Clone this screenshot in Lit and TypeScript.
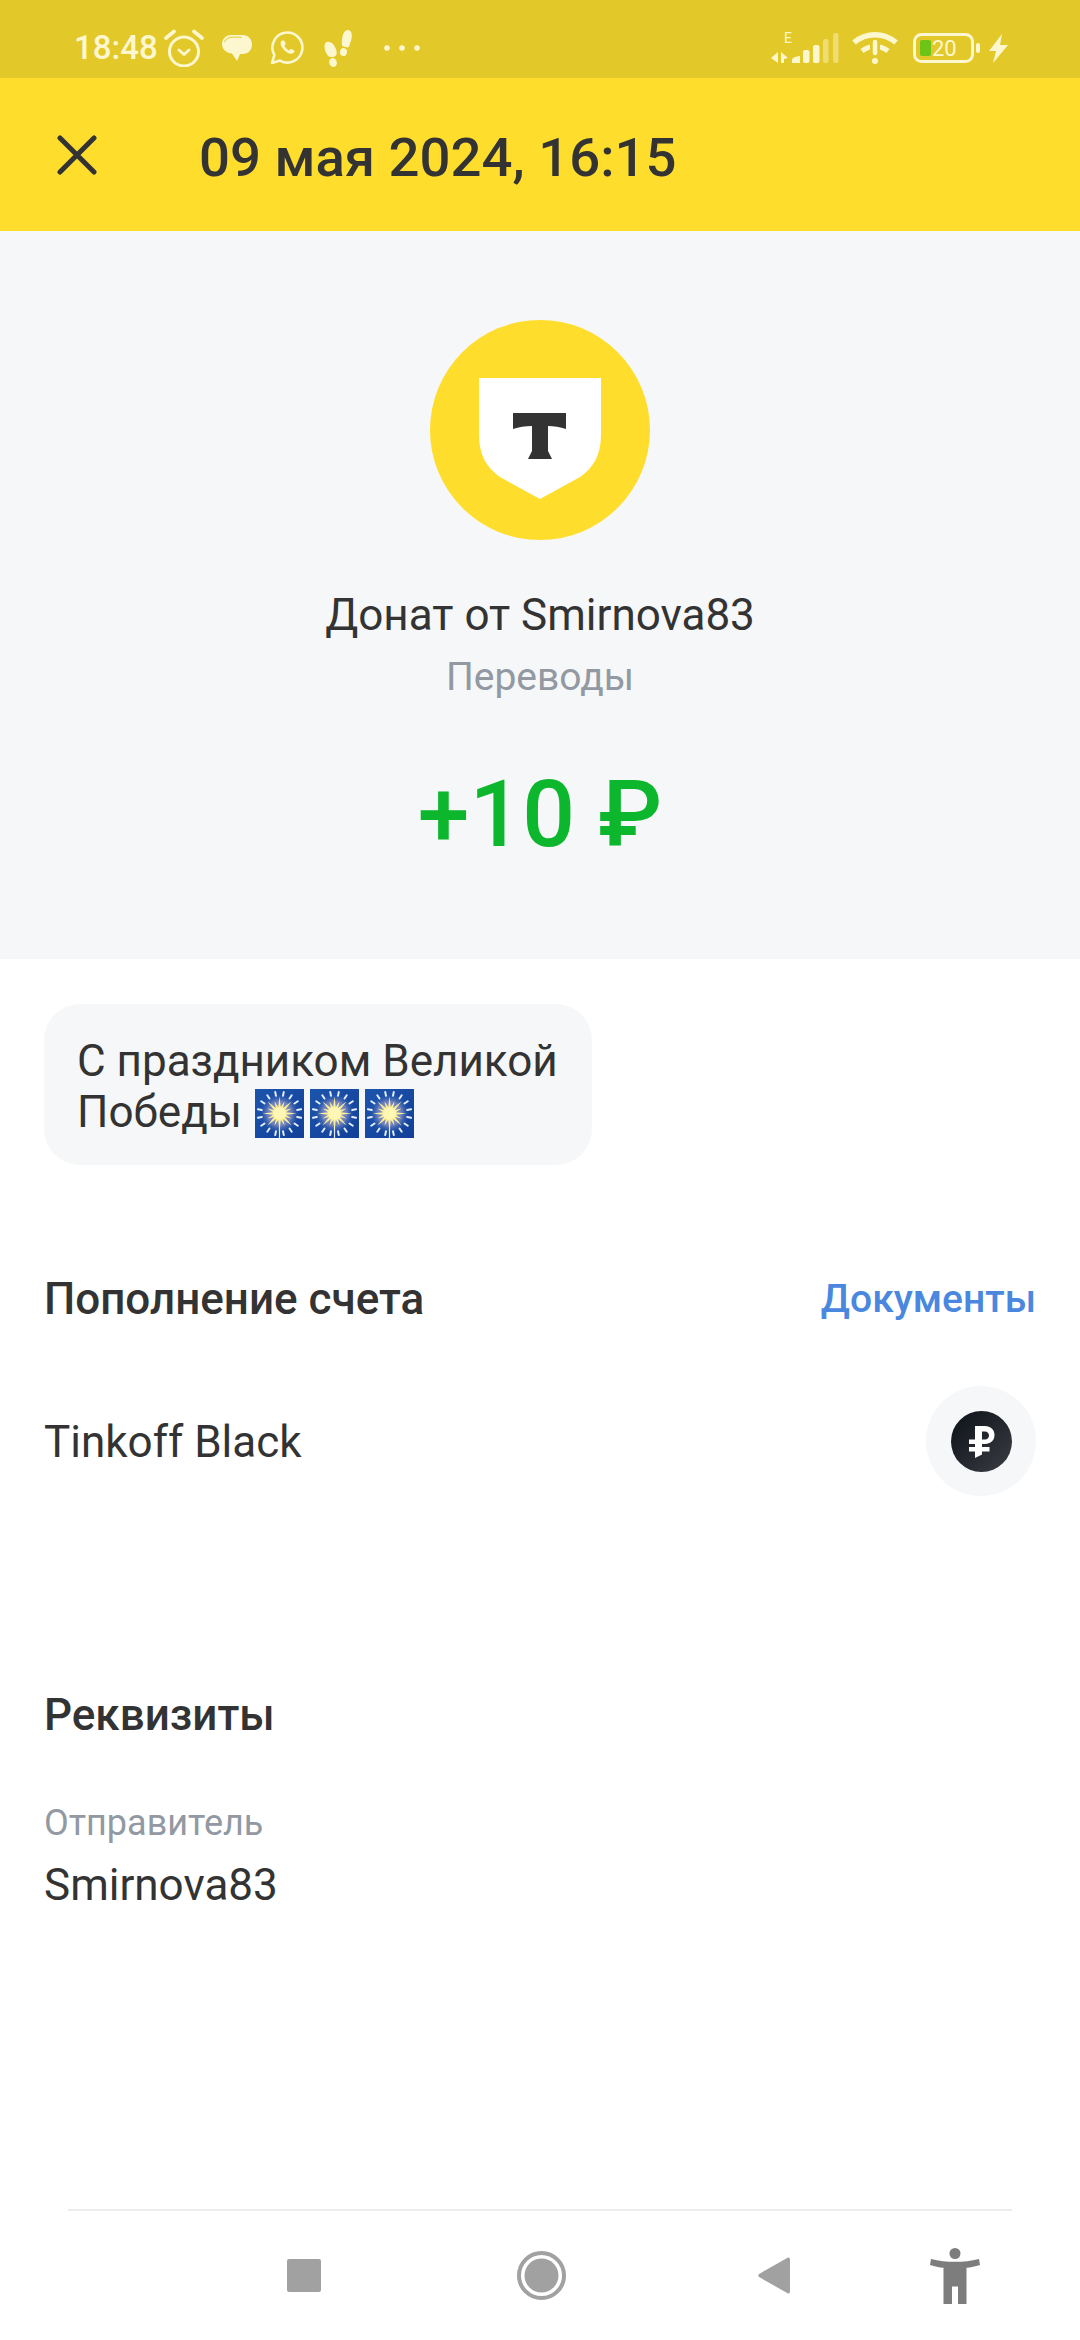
import { LitElement, html, svg, css } from 'lit';
import { customElement, property } from 'lit/decorators.js';

const rays = Array.from({ length: 16 }, (_, i) => (i * Math.PI) / 8);

// yellow star in the middle of the firework emoji
const starPoints = Array.from({ length: 32 }, (_, i) => {
  const a = (i * Math.PI) / 16;
  const r = i % 2 ? 6.5 : i % 4 ? 13 : 17;
  return `${24.5 + Math.cos(a) * r},${24.5 + Math.sin(a) * r}`;
}).join(' ');

const firework = html`
  <svg class="spark" viewBox="0 0 49 49">
    <defs>
      <linearGradient id="night" x1="0" y1="0" x2="1" y2="1">
        <stop offset="0" stop-color="#1c55ad" />
        <stop offset="1" stop-color="#123f98" />
      </linearGradient>
      <radialGradient id="halo">
        <stop offset="0" stop-color="#a9a8c4" />
        <stop offset="0.6" stop-color="#6f80bc" />
        <stop offset="1" stop-color="#2a5cb0" stop-opacity="0" />
      </radialGradient>
    </defs>
    <rect width="49" height="49" fill="url(#night)" />
    <circle cx="24.5" cy="24.5" r="20" fill="url(#halo)" />
    ${rays.map((a) => {
      const b = a + Math.PI / 16;
      return svg`<line x1=${24.5 + Math.cos(b) * 18} y1=${24.5 + Math.sin(b) * 18} x2=${24.5 + Math.cos(b) * 22} y2=${24.5 + Math.sin(b) * 22}
        stroke="#e4eefa" stroke-width="2" stroke-linecap="round" />`;
    })}
    <line x1="24.5" y1="24" x2="24.5" y2="49" stroke="#e4eefa" stroke-width="1.2" />
    <polygon points=${starPoints} fill="#fbf09a" />
    <circle cx="24.5" cy="24.5" r="6" fill="#fdf6b4" />
  </svg>
`;

@customElement('status-bar')
export class StatusBar extends LitElement {
  static override styles = css`
    :host {
      display: flex;
      align-items: center;
      height: 78px;
      padding: 18px 72px 0 74px;
      box-sizing: border-box;
      background: #e3c829;
      color: #fdf7cf;
    }

    .time {
      font: 500 33px/40px Roboto, sans-serif;
      margin-right: 6px;
    }

    svg {
      display: block;
      flex: none;
    }

    .left {
      display: flex;
      align-items: center;
      gap: 18px;
    }

    .dots {
      margin-left: 14px;
    }

    .right {
      display: flex;
      align-items: center;
      margin-left: auto;
    }
  `;

  override render() {
    return html`
      <span class="time">18:48</span>
      <div class="left">
        <svg width="40" height="38" viewBox="0 0 40 38" fill="none" stroke="#fdf7cf">
          <circle cx="20" cy="22.500" r="14.500" stroke-width="3" />
          <path d="M15 21l5 4.500 5-4.500" stroke-width="3" stroke-linecap="round" stroke-linejoin="round" />
          <path d="M2 9l8-6.500M38 9l-8-6.500" stroke-width="3.600" stroke-linecap="round" />
        </svg>
        <svg width="30" height="28" viewBox="0 0 30 28">
          <path d="M9 1h12c5 0 9 4 9 9.500s-4 9.500-9 9.500h-3l-3 7-5-7.500C4 19 0 15 0 10S4 1 9 1z" fill="#fdf7cf" />
          <path d="M2.500 8c1-3 4-4.800 8-4.800h9" fill="none" stroke="#e3c829" stroke-width="1" />
        </svg>
        <svg width="34" height="34" viewBox="0 0 34 34" fill="none" stroke="#fdf7cf">
          <path d="M2 32l2.400-8A15 15 0 1 1 10 29.600z" stroke-width="2.600" stroke-linejoin="round" />
          <path d="M12 9.500c-2 1.500-2 4 .5 7.500s6 5.800 8.500 5.800c2 0 3.500-1.300 3.500-3l-3.500-2-1.800 1.700c-2-.8-4-3-4.800-5l1.500-1.700-1.800-3.400z" fill="#fdf7cf" stroke="none" />
        </svg>
        <svg width="30" height="37" viewBox="0 0 30 37" fill="#fdf7cf">
          <path d="M5 12c4-1 8 3 9.500 9 .8 3.500-.5 5.500-3.500 6-3 .5-5-.5-6.500-3.500C2 19 1.500 13 5 12z" />
          <ellipse cx="11" cy="32.500" rx="3.800" ry="4.500" transform="rotate(-15 11 32.500)" />
          <path d="M25.500 0c3.500 0 5 3.500 4 8.500-.6 3-1.800 5.800-2.600 8.500-2.400.6-5 0-6.900-1.200C19.500 10 20.500 .5 25.500 0z" />
          <ellipse cx="21.500" cy="22" rx="3.500" ry="4" transform="rotate(15 21.500 22)" />
        </svg>
        <svg class="dots" width="36" height="6" viewBox="0 0 36 6" fill="#fdf7cf">
          <circle cx="3" cy="3" r="2.800" />
          <circle cx="18" cy="3" r="2.800" />
          <circle cx="33" cy="3" r="2.800" />
        </svg>
      </div>
      <div class="right">
        <svg width="68" height="44" viewBox="0 -6 68 44" fill="#fdf7cf">
          <text x="13" y="11" font-family="Roboto, sans-serif" font-size="14">E</text>
          <path d="M0 26l7-6v11zM10 20l7 6-4 1v4h-3z" />
          <path d="M21 31v-3c0-1.500 2-3.500 8-4v7z" />
          <rect x="32" y="18" width="6.500" height="13" rx="2" />
          <rect x="42" y="13" width="6.500" height="18" rx="2" />
          <rect x="52" y="7" width="5.500" height="24" rx="2" opacity="0.45" />
          <rect x="62" y="1" width="5.500" height="30" rx="2" opacity="0.45" />
        </svg>
        <svg style="margin-left: 13px" width="46" height="34" viewBox="0 0 46 34" fill="none" stroke="#fdf7cf">
          <path d="M2 11.500C14 1 32 1 44 11.500" stroke-width="5.500" />
          <path d="M10 20c8-6 18-6 26 0" stroke-width="5" />
          <path d="M23 10v16" stroke="#e3c829" stroke-width="10" />
          <path d="M23 11v11" stroke-width="4.500" stroke-linecap="round" />
          <circle cx="23" cy="30" r="3" fill="#fdf7cf" stroke="none" />
        </svg>
        <svg style="margin-left: 15px" width="68" height="30" viewBox="0 0 68 30">
          <rect x="1.500" y="1.500" width="58" height="27" rx="7" fill="none" stroke="#fdf7cf" stroke-width="3" />
          <rect x="7" y="7" width="11" height="16" rx="2" fill="#6cc516" />
          <text x="19" y="23" font-family="Roboto, sans-serif" font-size="22" fill="#fdf7cf">20</text>
          <rect x="63" y="10" width="4" height="10" rx="2" fill="#fdf7cf" />
        </svg>
        <svg style="margin-left: 8px" width="19" height="29" viewBox="0 0 19 29" fill="#fdf7cf">
          <path d="M13 0L0 17h7l-3 12L19 11h-8z" />
        </svg>
      </div>
    `;
  }
}

@customElement('nav-bar')
export class NavBar extends LitElement {
  static override styles = css`
    :host {
      display: flex;
      align-items: center;
      height: 129px;
      padding-left: 287px;
      background: #fff;
    }

    svg {
      display: block;
      flex: none;
    }

    .home {
      margin-left: 196px;
    }

    .back {
      margin-left: 192px;
    }

    .access {
      margin-left: 140px;
    }
  `;

  override render() {
    return html`
      <svg width="34" height="33" viewBox="0 0 34 33"><rect width="34" height="33" rx="2" fill="#a1a1a1" /></svg>
      <svg class="home" width="49" height="49" viewBox="0 0 49 49">
        <circle cx="24.500" cy="24.500" r="22.500" fill="none" stroke="#a1a1a1" stroke-width="4" />
        <circle cx="24.500" cy="24.500" r="17" fill="#a1a1a1" />
      </svg>
      <svg class="back" width="32" height="37" viewBox="0 0 32 37">
        <path d="M30 0.500c1 0 2 .5 2 2v32c0 1.500-1 2-2 2L1 20c-1-1-1-2 0-3z" fill="#a1a1a1" />
      </svg>
      <svg class="access" width="50" height="56" viewBox="0 0 50 56" fill="#7d7d7d">
        <ellipse cx="25" cy="5.500" rx="5.500" ry="5.500" />
        <path d="M1 11c8 2 16 2.800 24 2.800S41 13 49 11l1 6c-5 1.500-9 2.500-13.500 2.800V56h-8.500V38.500h-6V56h-8.500V19.800C9 19.500 5 18.500 0 17z" />
      </svg>
    `;
  }
}

@customElement('app-root')
export class AppRoot extends LitElement {
  static override styles = css`
    :host {
      display: flex;
      flex-direction: column;
      height: 2340px;
      background: #fff;
      color: #333;
      font-family: Roboto, sans-serif;
    }

    .top {
      display: flex;
      align-items: center;
      height: 153px;
      background: #ffdd2d;
    }

    .close {
      display: block;
      margin-left: 56px;
    }

    .date {
      margin-left: 101px;
      padding-top: 4px;
      font-size: 54.5px;
      font-weight: 500;
      line-height: 60px;
    }

    .hero {
      display: flex;
      flex-direction: column;
      align-items: center;
      height: 728px;
      box-sizing: border-box;
      padding-top: 89px;
      background: #f6f7f8;
    }

    .logo {
      display: block;
    }

    .name {
      margin-top: 50px;
      font-size: 44px;
      line-height: 50px;
    }

    .category {
      margin-top: 15px;
      font-size: 39px;
      line-height: 44px;
      color: #9299a2;
    }

    .amount {
      margin-top: 60px;
      font-size: 93px;
      font-weight: 500;
      line-height: 112px;
      color: #0cb72d;
    }

    .bubble {
      align-self: flex-start;
      margin: 45px 0 0 44px;
      padding: 32px 34px 27px 33px;
      border-radius: 36px;
      background: #f6f7f8;
      font-size: 44px;
      line-height: 51px;
    }

    .sparks {
      display: inline-flex;
      gap: 6px;
      vertical-align: -11px;
      margin-left: 2px;
    }

    .spark {
      display: block;
      width: 49px;
      height: 49px;
    }

    .heading {
      display: flex;
      justify-content: space-between;
      margin: 109px 44px 0;
      font-size: 44px;
      font-weight: 500;
      line-height: 50px;
    }

    .heading a {
      font-size: 39px;
      color: #4a88e0;
    }

    .account {
      display: flex;
      align-items: center;
      justify-content: space-between;
      margin: 62px 44px 0;
      font-size: 44px;
    }

    .account span {
      padding-top: 2px;
    }

    .badge {
      display: flex;
      align-items: center;
      justify-content: center;
      width: 110px;
      height: 110px;
      border-radius: 50%;
      background: #f6f7f8;
    }

    .details {
      margin: 194px 44px 0;
      font-size: 44px;
      font-weight: 500;
      line-height: 50px;
    }

    .label {
      margin: 63px 44px 0;
      font-size: 36px;
      line-height: 40px;
      color: #9299a2;
    }

    .value {
      margin: 17px 44px 0;
      font-size: 44px;
      line-height: 50px;
    }

    .rule {
      margin: auto 68px 0 68px;
      height: 2px;
      background: #ececec;
    }
  `;

  @property({ type: Number }) amount = 10;

  override render() {
    return html`
      <status-bar></status-bar>
      <header class="top">
        <svg class="close" width="42" height="40" viewBox="0 0 42 40" fill="none" stroke="#333" stroke-width="5" stroke-linecap="round">
          <path d="M4 3l34 34M38 3L4 37" />
        </svg>
        <span class="date">09 мая 2024, 16:15</span>
      </header>

      <section class="hero">
        <svg class="logo" width="220" height="220" viewBox="0 0 220 220">
          <circle cx="110" cy="110" r="110" fill="#ffdd2d" />
          <path d="M49 58H171V115C171 135 163 148 150 157L110 179L70 157C57 148 49 135 49 115Z" fill="#fff" />
          <path d="M83 93H136V109C130 107 124 106 118 106V131L122 139H98L102 131V106C95 106 89 107 83 109Z" fill="#333" />
        </svg>
        <div class="name">Донат от Smirnova83</div>
        <div class="category">Переводы</div>
        <div class="amount">+${this.amount} ₽</div>
      </section>

      <div class="bubble">
        С праздником Великой<br />
        Победы <span class="sparks">${firework}${firework}${firework}</span>
      </div>

      <div class="heading">
        <span>Пополнение счета</span>
        <a>Документы</a>
      </div>

      <div class="account">
        <span>Tinkoff Black</span>
        <div class="badge">
          <svg width="61" height="61" viewBox="0 0 61 61">
            <defs>
              <linearGradient id="coin" x1="0" y1="0" x2="1" y2="1">
                <stop offset="0" stop-color="#0d1118" />
                <stop offset="1" stop-color="#3a3d42" />
              </linearGradient>
            </defs>
            <circle cx="30.500" cy="30.500" r="30.500" fill="url(#coin)" />
            <path fill="#fff" fill-rule="evenodd" d="M24 15h10c5.500 0 9.500 3.500 9.500 9s-4 9-9.500 9h-3v3h7.500v4.500H31v3l-7 3.500v-6.500h-6v-4.500h6v-3h-6v-4.500h6zM31 20.500v8h3c2.500 0 4-1.700 4-4s-1.500-4-4-4z" />
          </svg>
        </div>
      </div>

      <div class="details">Реквизиты</div>
      <div class="label">Отправитель</div>
      <div class="value">Smirnova83</div>

      <div class="rule"></div>
      <nav-bar></nav-bar>
    `;
  }
}
